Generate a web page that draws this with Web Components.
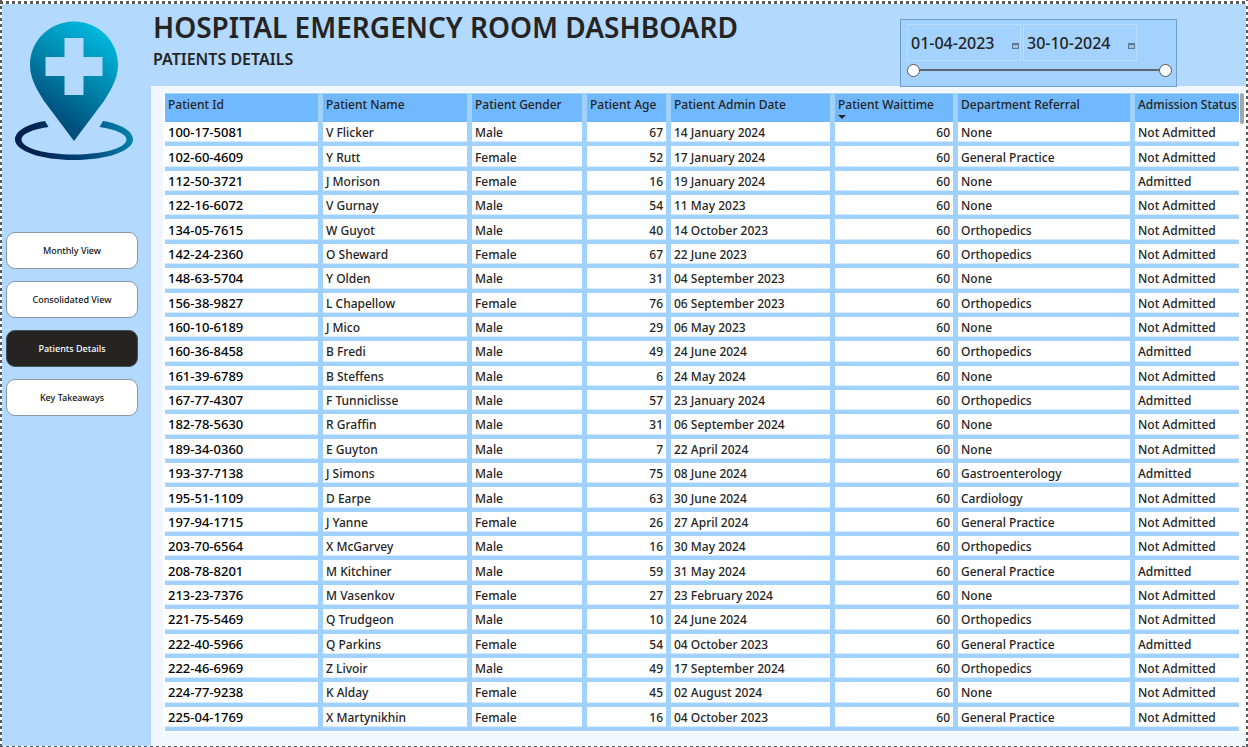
<!DOCTYPE html>
<html lang="en">
<head>
<meta charset="utf-8">
<title>Hospital Emergency Room Dashboard</title>
<style>
html, body { margin: 0; height: 100%; }
body { font-family: "Noto Sans", "Open Sans", sans-serif; color: #252423; }
</style>
</head>
<body>
<er-dashboard></er-dashboard>

<template id="t-dashboard">
<style>
:host {
  display: block; box-sizing: border-box; min-height: 100%;
  padding: 4px 2px 1px;
  background:
    repeating-linear-gradient(90deg, #5a5a5a 0 3px, #fff 3px 6px) 0 1px / 100% 3px no-repeat,
    repeating-linear-gradient(180deg, #5a5a5a 0 3px, #fff 3px 6px) 0 0 / 2px 100% no-repeat,
    repeating-linear-gradient(180deg, #5a5a5a 0 3px, #fff 3px 6px) 100% 0 / 2px 100% no-repeat,
    repeating-linear-gradient(90deg, #5a5a5a 0 3px, #fff 3px 6px) 0 100% / 100% 1px no-repeat,
    #fff;
  display: grid;
  grid-template-columns: 149px minmax(0, 1fr);
  grid-template-rows: 82px minmax(0, 1fr);
}
aside { grid-row: 1 / 3; background: #b3d9ff; padding: 16px 13px 0 4px; box-sizing: border-box; }
er-logo { margin: 0 -4px 0 8px; }
nav { display: flex; flex-direction: column; gap: 12px; margin-top: 70px; }
header { background: #b3d9ff; display: flex; justify-content: space-between; padding: 0 69px 0 2px; }
h1 { margin: 0; font-size: 28px; line-height: 38px; padding-top: 4px; font-weight: 600; white-space: nowrap; }
h2 { margin: 0; font-size: 16px; line-height: 26px; font-weight: 600; }
er-range { margin-top: 15px; z-index: 1; }
main { background: #f0f7ff; padding: 6px 0 13px 12px; display: flex; }
er-patients { flex: 1; min-width: 0; }
</style>
<aside>
  <er-logo></er-logo>
  <nav aria-label="Pages">
    <er-nav-button>Monthly View</er-nav-button>
    <er-nav-button>Consolidated View</er-nav-button>
    <er-nav-button current>Patients Details</er-nav-button>
    <er-nav-button>Key Takeaways</er-nav-button>
  </nav>
</aside>
<header>
  <div>
    <h1>HOSPITAL EMERGENCY ROOM DASHBOARD</h1>
    <h2>PATIENTS DETAILS</h2>
  </div>
  <er-range from="01-04-2023" to="30-10-2024"></er-range>
</header>
<main><er-patients></er-patients></main>
</template>

<template id="t-logo">
<style>
:host { display: block; }
svg { display: block; width: 120px; height: 142px; }
</style>
<svg viewBox="14 20 120 142" role="img" aria-label="Hospital location">
  <defs>
    <linearGradient id="pin" gradientUnits="userSpaceOnUse" x1="105" y1="35" x2="52" y2="115">
      <stop offset="0" stop-color="#00b6dc"/><stop offset=".5" stop-color="#0086ac"/><stop offset="1" stop-color="#00507c"/>
    </linearGradient>
    <linearGradient id="ring" gradientUnits="userSpaceOnUse" x1="125" y1="122" x2="35" y2="150">
      <stop offset="0" stop-color="#0080a8"/><stop offset=".5" stop-color="#00477a"/><stop offset="1" stop-color="#00204f"/>
    </linearGradient>
  </defs>
  <path fill="url(#pin)" fill-rule="evenodd" d="M74 21.500C49.500 21.500 30 41 30 65C30 78 37 90 44 101L74 141L104 101C111 90 118 78 118 65C118 41 98.500 21.500 74 21.500ZM64.500 38H83.500V57H102.500V76H83.500V95H64.500V76H45.500V57H64.500Z"/>
  <path fill="url(#ring)" d="M45 121C27 124 15 131 15 139.500C15 151 41 160 74 160C107 160 133 151 133 139.500C133 131 121 124 103 121L99.500 127C116 129.500 126.500 134 126.500 139.500C126.500 148 103 154.500 74 154.500C45 154.500 21.500 148 21.500 139.500C21.500 134 32 129.500 48.500 127Z"/>
</svg>
</template>

<template id="t-nav">
<style>
:host { display: block; }
button {
  display: block; width: 100%; height: 37px; padding: 0; box-sizing: border-box;
  border: 1px solid #8a98a6; border-radius: 9px; background: #fff; color: #111;
  font: 500 9px/16px "Noto Sans", "Open Sans", sans-serif;
}
:host([current]) button { background: #252423; border-color: #48525c; color: #fff; }
</style>
<button type="button"><slot></slot></button>
</template>

<template id="t-range">
<style>
:host {
  display: block; position: relative; box-sizing: border-box; width: 277px; height: 68px;
  background: #a3d2ff; border: 1px solid #6f9fcf; padding: 4px 4px 0 6px;
}
.dates { display: flex; gap: 2px; }
label {
  display: flex; align-items: center; box-sizing: border-box; width: 114px; height: 37px;
  border: 1px solid #b9dcff; padding: 0 1px 0 3px;
}
input[type=text] {
  flex: 1; min-width: 0; padding: 0; border: 0; background: none; color: #252423;
  font: 500 16px/24px "Noto Sans", "Open Sans", sans-serif;
}
svg { width: 7px; height: 6px; margin-top: 6px; }
.track { position: relative; height: 14px; margin: 2px 0 0; }
.track::before { content: ""; position: absolute; left: 8px; right: 8px; top: 6px; height: 2px; background: #5f666e; }
.track input {
  appearance: none; position: absolute; inset: 0; width: 100%; height: 14px; margin: 0;
  background: none; pointer-events: none;
}
.track input::-webkit-slider-thumb {
  appearance: none; pointer-events: auto; box-sizing: border-box; width: 13px; height: 13px;
  border: 1px solid #555; border-radius: 50%; background: #fff;
}
</style>
<div class="dates">
  <label><input type="text" aria-label="Start date" id="from"><svg viewBox="0 0 7 6"><path fill="#8fb8dd" d="M0 0h7v6H0z"/><path fill="#5d7c9b" d="M0 0h7v2H0zM0 2h1v4H0zM6 2h1v4H6zM0 5h7v1H0z"/><path fill="#d5e8f8" d="M2 3h1v1H2zM4 3h1v1H4z"/></svg></label>
  <label><input type="text" aria-label="End date" id="to"><svg viewBox="0 0 7 6"><path fill="#8fb8dd" d="M0 0h7v6H0z"/><path fill="#5d7c9b" d="M0 0h7v2H0zM0 2h1v4H0zM6 2h1v4H6zM0 5h7v1H0z"/><path fill="#d5e8f8" d="M2 3h1v1H2zM4 3h1v1H4z"/></svg></label>
</div>
<div class="track">
  <input type="range" min="0" max="100" value="0" aria-label="Range start">
  <input type="range" min="0" max="100" value="100" aria-label="Range end">
</div>
</template>

<template id="t-patients">
<style>
:host { display: flex; background: #fff; padding: 1px 2px 2px 2px; }
table { flex: 1; min-width: 0; border-collapse: separate; border-spacing: 0; table-layout: fixed; }
th, td { box-sizing: border-box; overflow: hidden; white-space: nowrap; text-align: left; border-right: 5px solid #a0d1ff; }
th:last-child, td:last-child { border-right: 0; }
th { height: 29px; padding: 1px 0 0 3px; font-size: 12px; line-height: 20px; font-weight: 500; background: #70b9ff; border-top: 1px solid #a0d1ff; vertical-align: top; }
td { padding: 1px 3px 0; font-size: 12px; line-height: 19px; font-weight: 500; vertical-align: middle; border-bottom: 4px solid #a0d1ff; box-shadow: inset 0 -1px #d4eaff; }
td:first-child { color: #000; font-size: 13px; }
td.num { text-align: right; }
svg { display: block; width: 8px; height: 4px; }
.bar { width: 4px; height: 31px; border-radius: 2px; background: #a6a6a6; margin-left: 1px; }
</style>
<table>
  <colgroup></colgroup>
  <thead><tr></tr></thead>
  <tbody></tbody>
</table>
<div class="bar"></div>
</template>

<script>
const attach = (el, id) => {
  const root = el.attachShadow({ mode: "open" });
  root.append(document.getElementById(id).content.cloneNode(true));
  return root;
};

const COLUMNS = [
  ["Patient Id", 158], ["Patient Name", 149], ["Patient Gender", 115], ["Patient Age", 84],
  ["Patient Admin Date", 164], ["Patient Waittime", 123], ["Department Referral", 177], ["Admission Status", 104]
];

const PATIENTS = `100-17-5081|V Flicker|Male|67|14 January 2024|60|None|Not Admitted
102-60-4609|Y Rutt|Female|52|17 January 2024|60|General Practice|Not Admitted
112-50-3721|J Morison|Female|16|19 January 2024|60|None|Admitted
122-16-6072|V Gurnay|Male|54|11 May 2023|60|None|Not Admitted
134-05-7615|W Guyot|Male|40|14 October 2023|60|Orthopedics|Not Admitted
142-24-2360|O Sheward|Female|67|22 June 2023|60|Orthopedics|Not Admitted
148-63-5704|Y Olden|Male|31|04 September 2023|60|None|Not Admitted
156-38-9827|L Chapellow|Female|76|06 September 2023|60|Orthopedics|Not Admitted
160-10-6189|J Mico|Male|29|06 May 2023|60|None|Not Admitted
160-36-8458|B Fredi|Male|49|24 June 2024|60|Orthopedics|Admitted
161-39-6789|B Steffens|Male|6|24 May 2024|60|None|Not Admitted
167-77-4307|F Tunniclisse|Male|57|23 January 2024|60|Orthopedics|Admitted
182-78-5630|R Graffin|Male|31|06 September 2024|60|None|Not Admitted
189-34-0360|E Guyton|Male|7|22 April 2024|60|None|Not Admitted
193-37-7138|J Simons|Male|75|08 June 2024|60|Gastroenterology|Admitted
195-51-1109|D Earpe|Male|63|30 June 2024|60|Cardiology|Not Admitted
197-94-1715|J Yanne|Female|26|27 April 2024|60|General Practice|Not Admitted
203-70-6564|X McGarvey|Male|16|30 May 2024|60|Orthopedics|Not Admitted
208-78-8201|M Kitchiner|Male|59|31 May 2024|60|General Practice|Admitted
213-23-7376|M Vasenkov|Female|27|23 February 2024|60|None|Not Admitted
221-75-5469|Q Trudgeon|Male|10|24 June 2024|60|Orthopedics|Not Admitted
222-40-5966|Q Parkins|Female|54|04 October 2023|60|General Practice|Admitted
222-46-6969|Z Livoir|Male|49|17 September 2024|60|Orthopedics|Not Admitted
224-77-9238|K Alday|Female|45|02 August 2024|60|None|Not Admitted
225-04-1769|X Martynikhin|Female|16|04 October 2023|60|General Practice|Not Admitted`
  .split("\n").map(line => line.split("|"));

customElements.define("er-logo", class extends HTMLElement {
  constructor() { super(); attach(this, "t-logo"); }
});

customElements.define("er-nav-button", class extends HTMLElement {
  constructor() { super(); attach(this, "t-nav"); }
  connectedCallback() {
    if (this.hasAttribute("current")) this.shadowRoot.querySelector("button").setAttribute("aria-current", "page");
  }
});

customElements.define("er-range", class extends HTMLElement {
  constructor() { super(); attach(this, "t-range"); }
  connectedCallback() {
    for (const id of ["from", "to"]) this.shadowRoot.getElementById(id).value = this.getAttribute(id);
  }
});

customElements.define("er-patients", class extends HTMLElement {
  constructor() {
    super();
    const root = attach(this, "t-patients");
    const group = root.querySelector("colgroup");
    const head = root.querySelector("thead tr");
    for (const [name, width] of COLUMNS) {
      const col = document.createElement("col");
      col.style.width = width + "px";
      group.append(col);
      const th = document.createElement("th");
      th.scope = "col";
      th.textContent = name;
      if (name === "Patient Waittime") {
        th.setAttribute("aria-sort", "descending");
        th.insertAdjacentHTML("beforeend", '<svg viewBox="0 0 8 4"><path fill="#252423" d="M0 0h8L4 4z"/></svg>');
      }
      head.append(th);
    }
    const body = root.querySelector("tbody");
    for (const patient of PATIENTS) {
      const row = body.insertRow();
      patient.forEach((text, i) => {
        const cell = row.insertCell();
        cell.textContent = text;
        if (i === 3 || i === 5) cell.className = "num";
      });
    }
  }
});

customElements.define("er-dashboard", class extends HTMLElement {
  constructor() { super(); attach(this, "t-dashboard"); }
});
</script>
</body>
</html>
